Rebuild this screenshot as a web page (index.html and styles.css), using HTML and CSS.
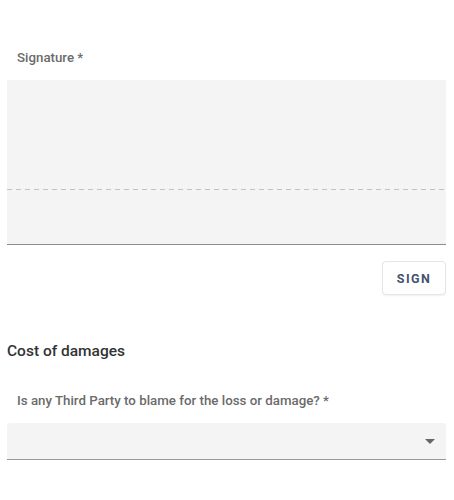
FILE: index.html
```html
<!DOCTYPE html>
<html>
<head>
<meta charset="utf-8">
<link rel="stylesheet" href="styles.css">
</head>
<body>
<div class="form">
  <div class="field-label sig-label">Signature *</div>
  <div class="sig-pad">
    <div class="sig-line"></div>
  </div>
  <div class="actions">
    <button class="sign-btn">SIGN</button>
  </div>
  <h2 class="section-title">Cost of damages</h2>
  <div class="field-label q-label">Is any Third Party to blame for the loss or damage? *</div>
  <div class="select">
    <svg class="arrow" width="10" height="5" viewBox="0 0 10 5"><path d="M0 0 L10 0 L5 5 Z" fill="#666"/></svg>
  </div>
</div>
</body>
</html>
```
FILE: styles.css
```css
html, body {
  margin: 0;
  padding: 0;
  background: #fff;
}
body {
  font-family: Roboto, "Liberation Sans", sans-serif;
  width: 454px;
  height: 500px;
  overflow: hidden;
}
.form {
  padding: 50px 8px 0 7px;
  display: flex;
  flex-direction: column;
}
.field-label {
  font-size: 13.3px;
  line-height: 16px;
  font-weight: 500;
  color: #6b6b6b;
  padding-left: 10px;
}
.sig-label {
  margin-bottom: 14px;
}
.sig-pad {
  height: 164px;
  background: #f4f4f4;
  border-bottom: 1px solid #8c8c8c;
}
.sig-line {
  margin-top: 109px;
  height: 1px;
  background-image: repeating-linear-gradient(to right, #c2c2c2 0, #c2c2c2 5px, transparent 5px, transparent 9px);
}
.actions {
  display: flex;
  justify-content: flex-end;
  margin-top: 16px;
}
.sign-btn {
  width: 64px;
  height: 34px;
  background: #fff;
  border: 1px solid #e4e4ea;
  border-radius: 4px;
  box-shadow: 0 1px 2px rgba(0,0,0,0.06);
  font-family: Roboto, "Liberation Sans", sans-serif;
  font-size: 12.5px;
  font-weight: 700;
  letter-spacing: 1.4px;
  color: #45526f;
  padding: 0;
}
.section-title {
  margin: 46px 0 0 0;
  font-size: 15.5px;
  line-height: 20px;
  font-weight: 500;
  color: #333;
}
.q-label {
  margin-top: 32px;
}
.select {
  margin-top: 14px;
  height: 36px;
  background: #f4f4f4;
  border-bottom: 1px solid #9a9a9a;
  border-radius: 3px 3px 0 0;
  display: flex;
  align-items: center;
  justify-content: flex-end;
  padding-right: 11px;
}
.arrow {
  display: block;
}
```
